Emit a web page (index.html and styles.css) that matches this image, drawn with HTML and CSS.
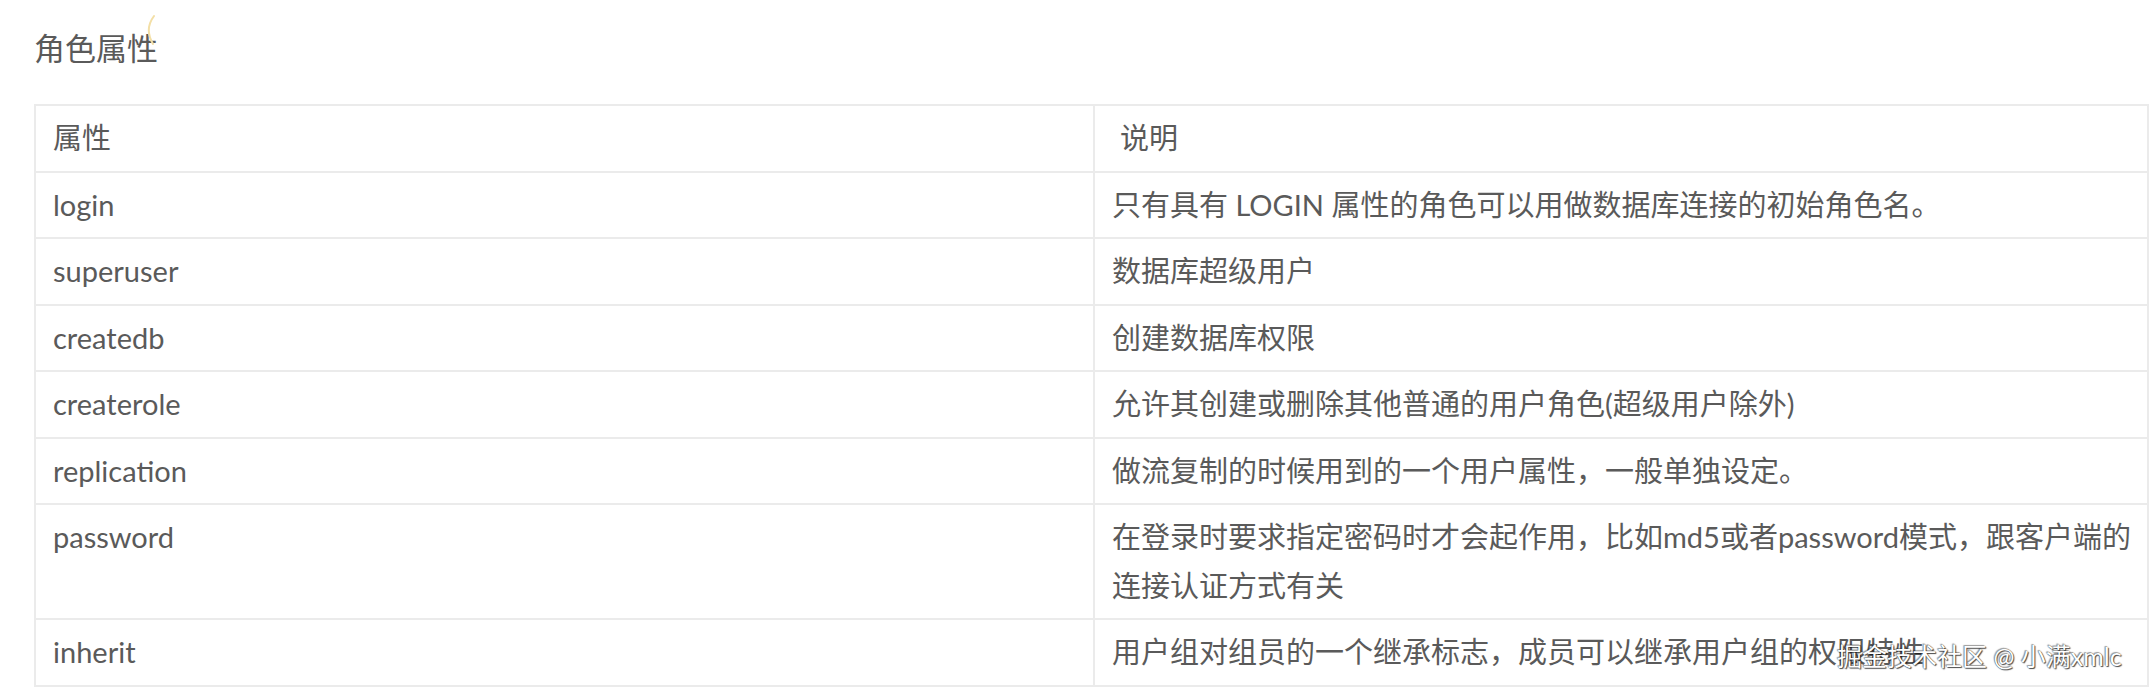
FILE: index.html
```html
<!DOCTYPE html>
<html lang="zh-CN">
<head>
<meta charset="utf-8">
<title>角色属性</title>
<link rel="stylesheet" href="styles.css">
</head>
<body>
<main class="page">
  <h2 class="title">角色属性</h2>
  <svg class="cursor-mark" width="14" height="34" viewBox="0 0 14 34" aria-hidden="true">
    <path d="M10 2 C4 10, 3 20, 9 30" fill="none" stroke="#f3dfa6" stroke-width="2" stroke-linecap="round"/>
  </svg>
  <table class="attr-table">
    <colgroup>
      <col class="col-name">
      <col class="col-desc">
    </colgroup>
    <thead>
      <tr><th>属性</th><th class="th-desc">说明</th></tr>
    </thead>
    <tbody>
      <tr><td>login</td><td>只有具有 LOGIN 属性的角色可以用做数据库连接的初始角色名。</td></tr>
      <tr><td>superuser</td><td>数据库超级用户</td></tr>
      <tr><td>createdb</td><td>创建数据库权限</td></tr>
      <tr><td>createrole</td><td>允许其创建或删除其他普通的用户角色(超级用户除外)</td></tr>
      <tr><td>replication</td><td>做流复制的时候用到的一个用户属性，一般单独设定。</td></tr>
      <tr><td>password</td><td>在登录时要求指定密码时才会起作用，比如md5或者password模式，跟客户端的连接认证方式有关</td></tr>
      <tr><td>inherit</td><td>用户组对组员的一个继承标志，成员可以继承用户组的权限特性</td></tr>
    </tbody>
  </table>
  <div class="watermark">掘金技术社区 @ 小满xmlc</div>
</main>
</body>
</html>
```

FILE: styles.css
```css
html, body {
  margin: 0;
  padding: 0;
  background: #ffffff;
}

body {
  font-family: Lato, "Noto Sans CJK SC", "Noto Sans", sans-serif;
  color: #555555;
  width: 2150px;
  height: 693px;
  overflow: hidden;
}

.page {
  position: relative;
  padding: 24px 0 0 34px;
  height: 693px;
  box-sizing: border-box;
}

.title {
  margin: 0 0 32px 0;
  font-size: 31px;
  line-height: 48px;
  font-weight: normal;
  color: #5a5a5a;
}

.cursor-mark {
  position: absolute;
  left: 144px;
  top: 14px;
}

.attr-table {
  border-collapse: collapse;
  width: 2115px;
  table-layout: fixed;
  font-size: 29px;
  line-height: 48.5px;
}

.col-name {
  width: 1059px;
}

.attr-table th,
.attr-table td {
  border: 2px solid #ebebeb;
  padding: 8px 4px 8px 17px;
  text-align: left;
  vertical-align: top;
  font-weight: normal;
  color: #5a5a5a;
}

.attr-table .th-desc {
  padding-left: 25px;
}

.watermark {
  position: absolute;
  left: 1837px;
  top: 638px;
  font-size: 25px;
  line-height: 36px;
  color: #ffffff;
  text-shadow: 0 0 1px #333, 1px 1px 1px rgba(0,0,0,0.7), -1px -1px 1px rgba(0,0,0,0.35);
  white-space: nowrap;
}
```
